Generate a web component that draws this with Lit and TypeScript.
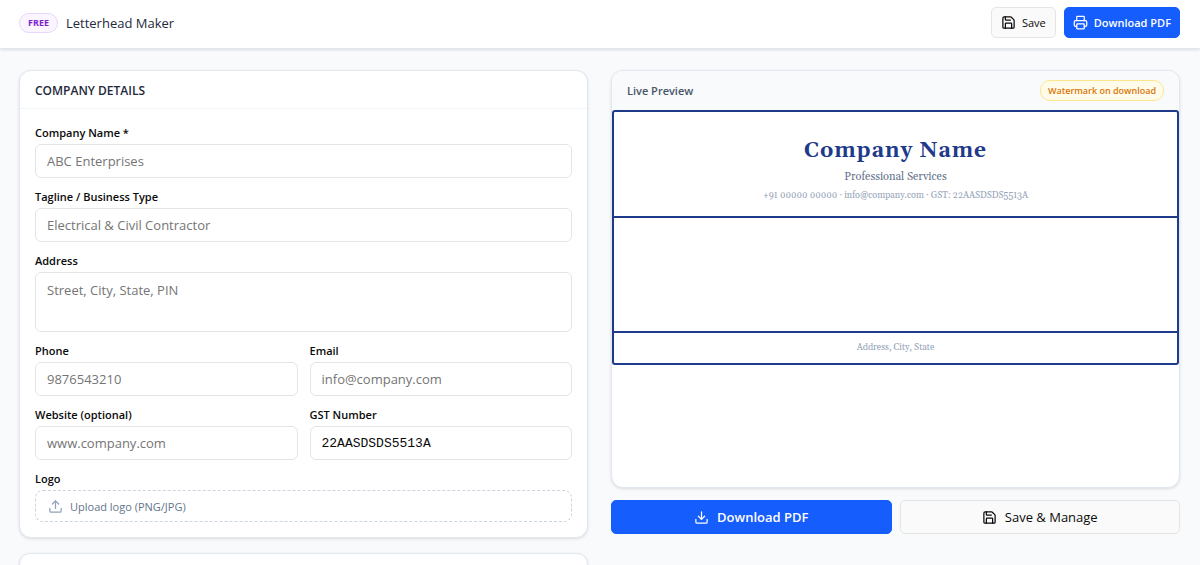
import { LitElement, html, css, svg } from "lit";
import { customElement, property, state } from "lit/decorators.js";

const glyphs: Record<string, unknown> = {
  save: svg`<path d="M15.2 3a2 2 0 0 1 1.4.6l3.8 3.8a2 2 0 0 1 .6 1.4V19a2 2 0 0 1-2 2H5a2 2 0 0 1-2-2V5a2 2 0 0 1 2-2z"/><path d="M17 21v-7a1 1 0 0 0-1-1H8a1 1 0 0 0-1 1v7"/><path d="M7 3v4a1 1 0 0 0 1 1h7"/>`,
  printer: svg`<path d="M6 18H4a2 2 0 0 1-2-2v-5a2 2 0 0 1 2-2h16a2 2 0 0 1 2 2v5a2 2 0 0 1-2 2h-2"/><path d="M6 9V3a1 1 0 0 1 1-1h10a1 1 0 0 1 1 1v6"/><rect x="6" y="14" width="12" height="8" rx="1"/>`,
  download: svg`<path d="M12 15V3"/><path d="M21 15v4a2 2 0 0 1-2 2H5a2 2 0 0 1-2-2v-4"/><path d="m7 10 5 5 5-5"/>`,
  upload: svg`<path d="M12 3v12"/><path d="m17 8-5-5-5 5"/><path d="M21 15v4a2 2 0 0 1-2 2H5a2 2 0 0 1-2-2v-4"/>`,
};

@customElement("line-icon")
export class LineIcon extends LitElement {
  @property() name = "save";

  static styles = css`
    :host { display: inline-flex; flex: none; width: 15px; height: 15px; }
    svg { width: 100%; height: 100%; }
  `;

  render() {
    return html`<svg viewBox="0 0 24 24" fill="none" stroke="currentColor" stroke-width="2"
      stroke-linecap="round" stroke-linejoin="round" aria-hidden="true">${glyphs[this.name]}</svg>`;
  }
}

@customElement("letterhead-preview")
export class LetterheadPreview extends LitElement {
  @property() company = "";
  @property() tagline = "";
  @property() address = "";
  @property() phone = "";
  @property() email = "";
  @property() gst = "";

  static styles = css`
    :host { display: block; font-family: Gelasio, Georgia, "Liberation Serif", serif; }
    .sheet { border: 2px solid #1e3a8a; border-radius: 3px; text-align: center; background: #fff; }
    .top { padding: 25px 16px 13px; border-bottom: 2px solid #1e3a8a; }
    .name { margin: 0; font-size: 21px; line-height: 28px; font-weight: 700; letter-spacing: 1px; color: #1e3a8a; }
    .tagline { margin: 4px 0 0; font-size: 11px; line-height: 16px; color: #64748b; }
    .contact { margin: 4px 0 0; font-size: 9px; line-height: 14px; color: #94a3b8; }
    .body { height: 113px; }
    .foot { padding: 8px 16px; border-top: 2px solid #1e3a8a; font-size: 9px; line-height: 14px; color: #94a3b8; }
  `;

  render() {
    return html`
      <div class="sheet">
        <div class="top">
          <h2 class="name">${this.company || "Company Name"}</h2>
          <p class="tagline">${this.tagline || "Professional Services"}</p>
          <p class="contact">${this.phone || "+91 00000 00000"} · ${this.email || "info@company.com"} · GST: ${this.gst}</p>
        </div>
        <div class="body"></div>
        <div class="foot">${this.address || "Address, City, State"}</div>
      </div>
    `;
  }
}

@customElement("app-root")
export class AppRoot extends LitElement {
  @state() private values: Record<string, string> = { gst: "22AASDSDS5513A" };

  static styles = css`
    :host {
      display: block; min-height: 100vh; background: #f8fafc; color: #0a0a0a;
      font-family: "Segoe UI", "Open Sans", "Noto Sans", sans-serif; font-size: 12px;
    }
    *, *::before, *::after { box-sizing: border-box; }
    button, input, textarea { font: inherit; color: inherit; margin: 0; }
    .bar {
      display: flex; align-items: center; gap: 8px; padding: 7px 20px 10px 19px;
      background: #fff; border-bottom: 1px solid #e2e8f0; box-shadow: 0 1px 3px rgba(0, 0, 0, .12);
    }
    .free {
      padding: 0 8px; border: 1px solid #e9d5ff; border-radius: 10px; background: #faf5ff;
      color: #7e22ce; font-size: 9px; line-height: 18px; font-weight: 700;
    }
    .title { flex: 1; margin: 0; font-size: 13px; line-height: 20px; font-weight: 500; color: #1e293b; }
    .btn {
      display: inline-flex; align-items: center; justify-content: center; gap: 6px; height: 31px;
      padding: 0 9px; border: 1px solid #e5e5e5; border-radius: 5px; background: #fafafa;
      font-size: 11px; font-weight: 500; cursor: pointer;
    }
    .primary { padding: 0 8px; background: #155dfc; border-color: #155dfc; color: #fff; font-weight: 600; }
    .large { height: 34px; font-size: 13px; gap: 8px; }
    .page {
      display: grid; grid-template-columns: minmax(0, 1fr) minmax(0, 1fr); gap: 23px;
      align-items: start; padding: 21px 20px 0 19px; max-height: calc(100vh - 49px); overflow: hidden;
    }
    .column { display: grid; gap: 15px; }
    .side { gap: 12px; }
    .card {
      background: #fff; border: 1px solid #e2e8f0; border-radius: 12px; overflow: hidden;
      box-shadow: 0 1px 3px rgba(0, 0, 0, .12);
    }
    .heading {
      margin: 0; padding: 11px 15px 8px; border-bottom: 1px solid #f1f5f9;
      font-size: 12px; line-height: 18px; font-weight: 600; color: #1e293b; text-transform: uppercase;
    }
    .form { display: grid; grid-template-columns: minmax(0, 1fr) minmax(0, 1fr); gap: 11px 12px; padding: 16px 15px 15px; }
    .field { display: grid; gap: 3px; }
    .wide { grid-column: 1 / -1; }
    .label { font-size: 11px; line-height: 16px; font-weight: 600; }
    .input {
      width: 100%; height: 34px; padding: 0 11px; border: 1px solid #e5e5e5; border-radius: 6px;
      background: #fff; font-size: 13px; line-height: 20px; outline: none; display: block; resize: none;
    }
    .input::placeholder { color: #757575; opacity: 1; }
    .input:focus { border-color: #155dfc; }
    .area { height: 60px; padding: 7px 11px; }
    .mono { font-family: "Liberation Mono", monospace; }
    .upload {
      display: flex; align-items: center; gap: 7px; width: 100%; height: 32px; padding: 0 12px;
      border: 1px dashed #cbd5e1; border-radius: 8px; background: #fff; color: #64748b; font-size: 11px; cursor: pointer;
    }
    .upload line-icon { color: #90a1b9; }
    .next { padding: 10px 15px; }
    .preview { min-height: 418px; }
    .preview-bar {
      display: flex; align-items: center; justify-content: space-between;
      padding: 9px 15px; background: #f8fafc;
    }
    .preview-title { margin: 0; font-size: 11px; line-height: 20px; font-weight: 600; color: #475569; }
    .notice {
      padding: 0 7px; border: 1px solid #fde68a; border-radius: 10px; background: #fffbeb;
      color: #d97706; font-size: 9px; line-height: 19px; font-weight: 600;
    }
    .actions { display: grid; grid-template-columns: 1fr 1fr; gap: 8px; }
  `;

  private set(key: string, e: Event) {
    this.values = { ...this.values, [key]: (e.target as HTMLInputElement).value };
  }

  private field(key: string, label: string, hint: string, wide = false, mono = false) {
    return html`
      <div class="field ${wide ? "wide" : ""}">
        <label class="label" for=${key}>${label}</label>
        <input class="input ${mono ? "mono" : ""}" id=${key} placeholder=${hint}
          .value=${this.values[key] ?? ""} @input=${(e: Event) => this.set(key, e)} />
      </div>
    `;
  }

  render() {
    const v = this.values;
    return html`
      <header class="bar">
        <span class="free">FREE</span>
        <h1 class="title">Letterhead Maker</h1>
        <button class="btn" type="button"><line-icon name="save"></line-icon>Save</button>
        <button class="btn primary" type="button"><line-icon name="printer"></line-icon>Download PDF</button>
      </header>
      <main class="page">
        <div class="column">
          <section class="card">
            <h2 class="heading">Company Details</h2>
            <form class="form">
              ${this.field("company", "Company Name *", "ABC Enterprises", true)}
              ${this.field("tagline", "Tagline / Business Type", "Electrical & Civil Contractor", true)}
              <div class="field wide">
                <label class="label" for="address">Address</label>
                <textarea class="input area" id="address" placeholder="Street, City, State, PIN"
                  @input=${(e: Event) => this.set("address", e)}></textarea>
              </div>
              ${this.field("phone", "Phone", "9876543210")}
              ${this.field("email", "Email", "info@company.com")}
              ${this.field("website", "Website (optional)", "www.company.com")}
              ${this.field("gst", "GST Number", "", false, true)}
              <div class="field wide">
                <label class="label" for="logo">Logo</label>
                <button class="upload" id="logo" type="button"><line-icon name="upload"></line-icon>Upload logo (PNG/JPG)</button>
              </div>
            </form>
          </section>
          <section class="card next"></section>
        </div>
        <div class="column side">
          <section class="card preview">
            <div class="preview-bar">
              <h2 class="preview-title">Live Preview</h2>
              <span class="notice">Watermark on download</span>
            </div>
            <letterhead-preview .company=${v.company ?? ""} .tagline=${v.tagline ?? ""} .address=${v.address ?? ""}
              .phone=${v.phone ?? ""} .email=${v.email ?? ""} .gst=${v.gst ?? ""}></letterhead-preview>
          </section>
          <div class="actions">
            <button class="btn large primary" type="button"><line-icon name="download"></line-icon>Download PDF</button>
            <button class="btn large" type="button"><line-icon name="save"></line-icon>Save &amp; Manage</button>
          </div>
        </div>
      </main>
    `;
  }
}
